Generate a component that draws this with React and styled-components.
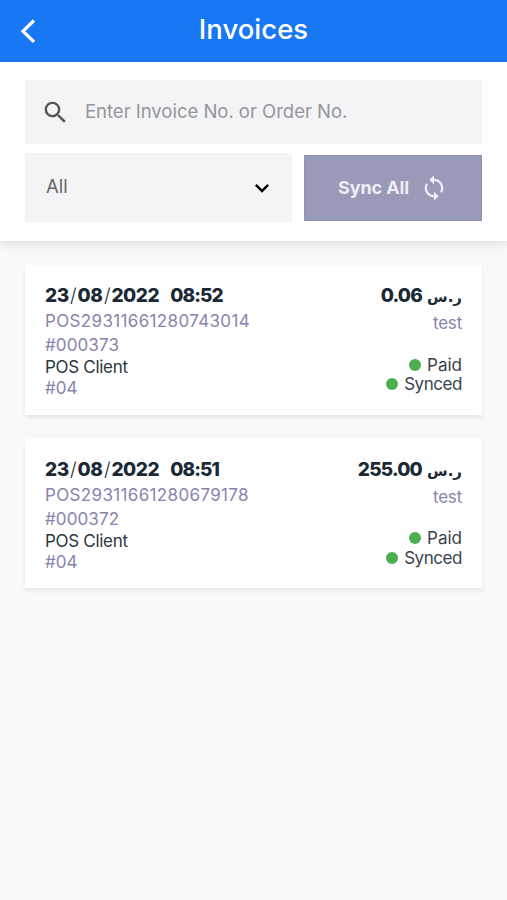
import React from 'react'
import styled, { createGlobalStyle } from 'styled-components'
import { MdSearch, MdSync, MdExpandMore } from 'react-icons/md'

const GlobalStyle = createGlobalStyle`
    * {
        box-sizing: border-box;
    }

    body {
        margin: 0;
        background: #f9f9f9;
        font-family: Inter, 'DejaVu Sans', sans-serif;
    }
`

const Page = styled.div`
    min-height: 900px;
    background: #f9f9f9;
`

const Header = styled.header`
    display: grid;
    grid-template-columns: 60px 1fr 60px;
    align-items: center;
    height: 62px;
    background: #1877f2;
    color: #fff;
`

const BackButton = styled.button`
    display: flex;
    padding: 0 0 0 20px;
    border: none;
    background: transparent;
    color: #fff;
    cursor: pointer;
`

const Title = styled.h1`
    margin: 0;
    padding-bottom: 5px;
    text-align: center;
    font-size: 27.5px;
    font-weight: 450;
    line-height: 34px;
`

const Filters = styled.section`
    height: 179px;
    padding: 18px 25px 0;
    background: #fff;
    box-shadow: 0 4px 8px rgba(0, 0, 0, 0.09);
`

const SearchBar = styled.label`
    display: flex;
    align-items: center;
    height: 64px;
    padding-left: 16px;
    background: #f4f4f6;
    color: #555;
`

const SearchInput = styled.input`
    flex: 1;
    min-width: 0;
    margin-left: 15px;
    padding: 0 0 2px;
    border: none;
    outline: none;
    background: transparent;
    font-family: inherit;
    font-size: 18.5px;
    letter-spacing: -0.02px;

    &::placeholder {
        color: #92979a;
        opacity: 1;
    }
`

const FilterRow = styled.div`
    display: flex;
    align-items: center;
    gap: 12px;
    margin-top: 9px;
`

const Select = styled.button`
    display: flex;
    align-items: center;
    justify-content: space-between;
    width: 267px;
    height: 69px;
    padding: 0 16px 0 21px;
    border: none;
    background: #f4f4f6;
    font-family: inherit;
    font-size: 18.5px;
    color: #666;
    cursor: pointer;

    svg {
        color: #000;
    }
`

const Selected = styled.span`
    padding-bottom: 4px;
`

const SyncButton = styled.button`
    display: flex;
    align-items: center;
    flex: 1;
    height: 66px;
    padding: 0 0 0 33px;
    gap: 11px;
    border: 1px solid #9292b3;
    background: #9999b8;
    font-family: inherit;
    font-size: 18px;
    font-weight: 700;
    letter-spacing: -0.1px;
    color: #ededf7;
    cursor: pointer;
`

const List = styled.main`
    display: flex;
    flex-direction: column;
    gap: 24px;
    padding: 24px 25px;
`

const Card = styled.article`
    display: flex;
    justify-content: space-between;
    height: 149.5px;
    padding: 18px 20px 0;
    background: #fff;
    box-shadow: 0 3px 4px rgba(0, 0, 0, 0.07);
`

const Column = styled.div`
    display: flex;
    flex-direction: column;
    align-items: ${({ $end }) => ($end ? 'flex-end' : 'flex-start')};
`

const Heading = styled.div`
    display: flex;
    gap: ${({ $gap }) => $gap};
    height: 26px;
    line-height: 26px;
    font-size: 19px;
    font-weight: 800;
    letter-spacing: -0.4px;
    color: #1a2935;
    white-space: pre;
`

const Time = styled.span`
    letter-spacing: -0.9px;
`

const Amount = styled.span`
    letter-spacing: -0.8px;
`

const Slash = styled.span`
    padding: 0 1.3px;
    font-weight: 300;
`

const Currency = styled.span`
    padding-top: 1px;
    font-family: 'DejaVu Sans', sans-serif;
    font-size: 15px;
    letter-spacing: 0;
`

const Detail = styled.div`
    height: ${({ $height }) => $height || '24px'};
    line-height: ${({ $height }) => $height || '24px'};
    font-size: 17px;
    letter-spacing: ${({ $spacing }) => $spacing || '0'};
    color: ${({ $dark }) => ($dark ? '#2c3740' : '#8884ae')};
`

const Statuses = styled.div`
    display: flex;
    flex-direction: column;
    align-items: flex-end;
    margin-top: 18px;
`

const Status = styled.div`
    display: flex;
    align-items: center;
    gap: 6px;
    height: 19.5px;
    font-size: 17px;
    letter-spacing: ${({ $spacing }) => $spacing || '0'};
    color: #38424d;

    &::before {
        content: '';
        width: 12px;
        height: 12px;
        border-radius: 50%;
        background: #4caf50;
    }
`

const invoices = [
    {
        date: ['23', '08', '2022'],
        time: '08:52',
        reference: 'POS29311661280743014',
        number: '#000373',
        client: 'POS Client',
        order: '#04',
        amount: '0.06',
        user: 'test',
    },
    {
        date: ['23', '08', '2022'],
        time: '08:51',
        reference: 'POS29311661280679178',
        number: '#000372',
        client: 'POS Client',
        order: '#04',
        amount: '255.00',
        user: 'test',
    },
]

const InvoiceCard = ({ invoice }) => {
    const [day, month, year] = invoice.date

    return (
        <Card>
            <Column>
                <Heading $gap="11px">
                    <span>{day}<Slash>/</Slash>{month}<Slash>/</Slash>{year}</span>
                    <Time>{invoice.time}</Time>
                </Heading>
                <Detail $spacing="0.35px">{invoice.reference}</Detail>
                <Detail $spacing="0.1px">{invoice.number}</Detail>
                <Detail $dark $height="20px" $spacing="-0.3px">{invoice.client}</Detail>
                <Detail $height="22px">{invoice.order}</Detail>
            </Column>
            <Column $end>
                <Heading $gap="5px">
                    <Amount>{invoice.amount}</Amount>
                    <Currency dir="rtl">ر.س</Currency>
                </Heading>
                <Detail $height="28px" $spacing="-0.2px">{invoice.user}</Detail>
                <Statuses>
                    <Status>Paid</Status>
                    <Status $spacing="-0.45px">Synced</Status>
                </Statuses>
            </Column>
        </Card>
    )
}

const App = () => {
    return (
        <>
            <GlobalStyle />
            <Page>
                <Header>
                    <BackButton aria-label="Back">
                        <svg width="16" height="24" viewBox="0 0 16 24" fill="none" stroke="currentColor" strokeWidth="3.2">
                            <path d="M14 1.5L3 12.2L14 22.8" />
                        </svg>
                    </BackButton>
                    <Title>Invoices</Title>
                </Header>
                <Filters>
                    <SearchBar>
                        <MdSearch size={29} />
                        <SearchInput placeholder="Enter Invoice No. or Order No." />
                    </SearchBar>
                    <FilterRow>
                        <Select>
                            <Selected>All</Selected>
                            <MdExpandMore size={28} />
                        </Select>
                        <SyncButton>
                            Sync All
                            <MdSync size={28} />
                        </SyncButton>
                    </FilterRow>
                </Filters>
                <List>
                    {invoices.map((invoice) => (
                        <InvoiceCard key={invoice.number} invoice={invoice} />
                    ))}
                </List>
            </Page>
        </>
    )
}

export default App
